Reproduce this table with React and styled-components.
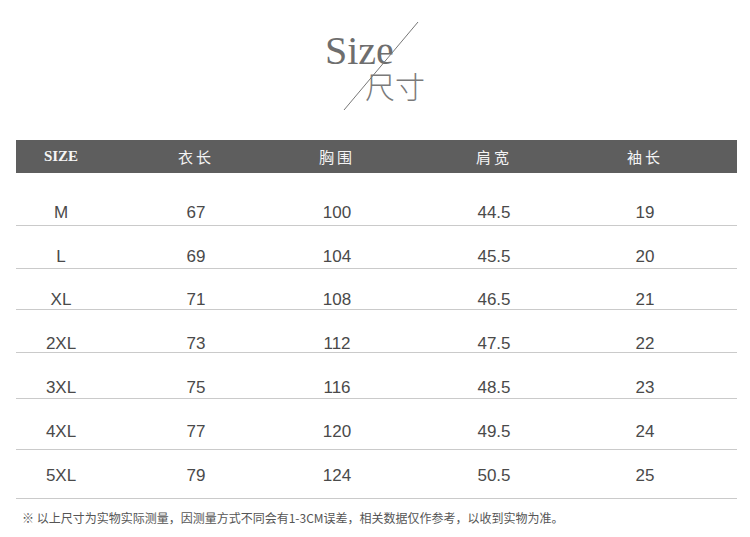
import styled, { createGlobalStyle } from 'styled-components';

const GlobalStyle = createGlobalStyle`
  html, body {
    margin: 0;
    padding: 0;
    background: #fff;
  }
`;

const columns = ['SIZE', '衣长', '胸围', '肩宽', '袖长'];

// each row: values, row height and top padding (rows are not evenly spaced in the original)
const rows = [
  { cells: ['M', '67', '100', '44.5', '19'], height: 53, pad: 30 },
  { cells: ['L', '69', '104', '45.5', '20'], height: 43, pad: 21 },
  { cells: ['XL', '71', '108', '46.5', '21'], height: 41, pad: 21 },
  { cells: ['2XL', '73', '112', '47.5', '22'], height: 43, pad: 24 },
  { cells: ['3XL', '75', '116', '48.5', '23'], height: 46, pad: 25 },
  { cells: ['4XL', '77', '120', '49.5', '24'], height: 51, pad: 23 },
  { cells: ['5XL', '79', '124', '50.5', '25'], height: 49, pad: 16 },
];

export default function App() {
  return (
    <Page>
      <GlobalStyle />
      <TitleArea>
        <TitleMark>
          <SizeWord>Size</SizeWord>
          <ChineseWord>尺寸</ChineseWord>
          <Slash width='110' height='96' viewBox='0 0 110 96'>
            <line x1='98' y1='4' x2='24' y2='92' stroke='#777' strokeWidth='1' />
          </Slash>
        </TitleMark>
      </TitleArea>

      <Table>
        <HeaderRow>
          {columns.map((c, i) => (
            <HeaderCell key={c} $latin={i === 0}>
              {c}
            </HeaderCell>
          ))}
        </HeaderRow>
        {rows.map((r) => (
          <Row key={r.cells[0]} $height={r.height} $pad={r.pad}>
            {r.cells.map((v, i) => (
              <Cell key={i}>{v}</Cell>
            ))}
          </Row>
        ))}
      </Table>

      <Note>※ 以上尺寸为实物实际测量，因测量方式不同会有1-3CM误差，相关数据仅作参考，以收到实物为准。</Note>
    </Page>
  );
}

const Page = styled.div`
  width: 750px;
  height: 537px;
  padding: 0 13px 0 16px;
  box-sizing: border-box;
  background: #fff;
`;

const TitleArea = styled.div`
  height: 140px;
  display: flex;
  justify-content: center;
  margin-left: -3px;
`;

const TitleMark = styled.div`
  position: relative;
  width: 110px;
  height: 96px;
  margin-top: 18px;
`;

const SizeWord = styled.div`
  margin: 14px 0 0 5px;
  font-family: 'Liberation Serif', 'Times New Roman', serif;
  font-size: 40px;
  line-height: 38px;
  color: #6e6e6e;
`;

const ChineseWord = styled.div`
  margin: 0 0 0 45px;
  font-family: 'Noto Sans CJK SC', sans-serif;
  font-weight: 200;
  font-size: 30px;
  line-height: 30px;
  color: #7a7a7a;
`;

const Slash = styled.svg`
  position: absolute;
  left: 0;
  top: 0;
`;

const Table = styled.div`
  width: 721px;
`;

const grid = `
  display: grid;
  grid-template-columns: 90px 180px 102px 212px 90px 1fr;
`;

const HeaderRow = styled.div`
  ${grid}
  height: 33px;
  align-items: center;
  background: #5e5e5e;
`;

const HeaderCell = styled.div`
  text-align: center;
  color: #f4f4f4;
  font-family: ${(p) =>
    p.$latin ? "'Liberation Serif', serif" : "'Noto Sans CJK SC', sans-serif"};
  font-weight: ${(p) => (p.$latin ? 700 : 400)};
  font-size: 15px;
  letter-spacing: ${(p) => (p.$latin ? '0' : '3px')};
`;

const Row = styled.div`
  ${grid}
  box-sizing: border-box;
  height: ${(p) => p.$height}px;
  padding-top: ${(p) => p.$pad}px;
  border-bottom: 1px solid #cacaca;
`;

const Cell = styled.div`
  text-align: center;
  font-family: 'Liberation Sans', Arial, sans-serif;
  font-size: 17px;
  line-height: 20px;
  color: #4a4a4a;
`;

const Note = styled.div`
  margin: 11px 0 0 6px;
  font-family: 'Noto Sans CJK SC', sans-serif;
  font-size: 12px;
  line-height: 16px;
  color: #555;
`;
